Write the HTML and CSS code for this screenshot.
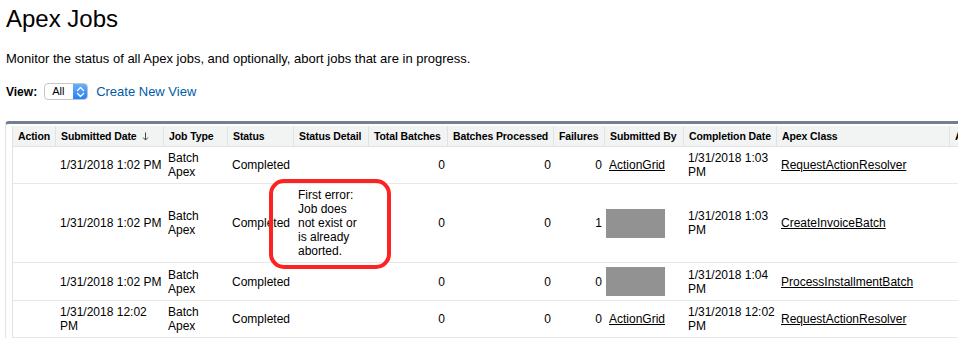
FILE: index.html
```html
<!DOCTYPE html>
<html>

<head>
    <title>Apex Jobs</title>
    <link rel="stylesheet" href="styles.css">
</head>

<body>
    <div class="page">
        <h1>Apex Jobs</h1>
        <p class="intro">Monitor the status of all Apex jobs, and optionally, abort jobs that are in progress.</p>
        <div class="view_bar">
            <label class="view_label">View:</label>
            <span class="select">
                <span class="select_text">All</span>
                <span class="stepper">
                    <svg width="9" height="12" viewBox="0 0 9 12">
                        <path d="M1.5 4.5 L4.5 1.5 L7.5 4.5 M1.5 7.5 L4.5 10.5 L7.5 7.5" fill="none" stroke="#fff" stroke-width="1.4" stroke-linecap="round" stroke-linejoin="round" />
                    </svg>
                </span>
            </span>
            <a class="create_link" href="#">Create New View</a>
        </div>

        <div class="block">
            <table class="jobs">
                <thead>
                    <tr>
                        <th class="c_action">Action</th>
                        <th class="c_submitted">Submitted Date
                            <svg class="sort" width="7" height="9" viewBox="0 0 7 9">
                                <path d="M3.5 0.5 V8 M1 5.5 L3.5 8 L6 5.5" fill="none" stroke="#444" stroke-width="1" />
                            </svg>
                        </th>
                        <th class="c_type">Job Type</th>
                        <th class="c_status">Status</th>
                        <th class="c_detail">Status Detail</th>
                        <th class="c_total">Total Batches</th>
                        <th class="c_processed">Batches Processed</th>
                        <th class="c_failures">Failures</th>
                        <th class="c_by">Submitted By</th>
                        <th class="c_completed">Completion Date</th>
                        <th class="c_class">Apex Class</th>
                        <th class="c_id">Apex Job ID</th>
                    </tr>
                </thead>
                <tbody>
                    <tr>
                        <td></td>
                        <td>1/31/2018 1:02 PM</td>
                        <td>Batch Apex</td>
                        <td>Completed</td>
                        <td></td>
                        <td class="num">0</td>
                        <td class="num">0</td>
                        <td class="num">0</td>
                        <td><a href="#">ActionGrid</a></td>
                        <td>1/31/2018 1:03 PM</td>
                        <td><a href="#">RequestActionResolver</a></td>
                        <td></td>
                    </tr>
                    <tr>
                        <td></td>
                        <td>1/31/2018 1:02 PM</td>
                        <td>Batch Apex</td>
                        <td>Completed</td>
                        <td class="detail">First error: Job does not exist or is already aborted.
                            <div class="callout"></div>
                        </td>
                        <td class="num">0</td>
                        <td class="num">0</td>
                        <td class="num">1</td>
                        <td><span class="redacted"></span></td>
                        <td>1/31/2018 1:03 PM</td>
                        <td><a href="#">CreateInvoiceBatch</a></td>
                        <td></td>
                    </tr>
                    <tr>
                        <td></td>
                        <td>1/31/2018 1:02 PM</td>
                        <td>Batch Apex</td>
                        <td>Completed</td>
                        <td></td>
                        <td class="num">0</td>
                        <td class="num">0</td>
                        <td class="num">0</td>
                        <td><span class="redacted"></span></td>
                        <td>1/31/2018 1:04 PM</td>
                        <td><a href="#">ProcessInstallmentBatch</a></td>
                        <td></td>
                    </tr>
                    <tr>
                        <td></td>
                        <td>1/31/2018 12:02 PM</td>
                        <td>Batch Apex</td>
                        <td>Completed</td>
                        <td></td>
                        <td class="num">0</td>
                        <td class="num">0</td>
                        <td class="num">0</td>
                        <td><a href="#">ActionGrid</a></td>
                        <td>1/31/2018 12:02 PM</td>
                        <td><a href="#">RequestActionResolver</a></td>
                        <td></td>
                    </tr>
                </tbody>
            </table>
        </div>
    </div>
</body>

</html>
```

FILE: styles.css
```css
html,
body {
    margin: 0;
    padding: 0;
    background: #fff;
    overflow: hidden;
}
.page {
    padding: 5px 0 0 6px;
    font-family: "Liberation Sans", Arial, sans-serif;
    color: #000;
}
h1 {
    margin: 0;
    font-size: 24px;
    line-height: 28px;
    font-weight: normal;
}
.intro {
    margin: 18px 0 0 0;
    font-size: 13px;
    line-height: 15px;
}
.view_bar {
    display: flex;
    align-items: center;
    margin-top: 17px;
    height: 17px;
}
.view_label {
    font-size: 12px;
    font-weight: bold;
    margin-right: 7px;
}
.select {
    display: flex;
    width: 44px;
    height: 17px;
    box-sizing: border-box;
    border: 1px solid #c6c6c6;
    border-radius: 4px;
    overflow: hidden;
    background: #fff;
}
.select_text {
    flex: 1;
    font-size: 11px;
    line-height: 15px;
    padding-left: 7px;
}
.stepper {
    width: 15px;
    display: flex;
    align-items: center;
    justify-content: center;
    background: linear-gradient(#6db2fb, #1f7ef6);
    margin: -1px -1px -1px 0;
}
.create_link {
    margin-left: 8px;
    font-size: 13px;
    color: #015ba7;
    text-decoration: none;
}
.block {
    margin: 21px 0 0 -1px;
    border-top: 3px solid #737d94;
    border-left: 1px solid #e0e3e5;
    border-top-left-radius: 4px;
    padding: 2px 0 0 6px;
    overflow: hidden;
}
.jobs {
    table-layout: fixed;
    width: 1038px;
    border-collapse: separate;
    border-spacing: 0;
    border-left: 1px solid #e0e3e5;
    font-size: 12px;
}
.jobs th {
    box-sizing: border-box;
    background-color: #f2f3f3;
    border-right: 1px solid #e0e3e5;
    border-bottom: 1px solid #e0e3e5;
    padding: 4px 1px 4px 5px;
    font-size: 10.5px;
    line-height: 12px;
    font-weight: bold;
    text-align: left;
    white-space: nowrap;
    letter-spacing: -0.1px;
}
.jobs td {
    border-bottom: 1px solid #e8e8e8;
    padding: 4px 1px 4px 4px;
    line-height: 14px;
    vertical-align: middle;
}
.jobs td.num {
    text-align: right;
    padding-right: 3px;
}
.jobs td.detail {
    position: relative;
    padding-right: 6px;
}
.jobs a {
    color: #000;
    text-decoration: underline;
}
.sort {
    margin-left: 3px;
    vertical-align: -1px;
}
.c_action { width: 43px; }
.c_submitted { width: 108px; }
.c_type { width: 64px; }
.c_status { width: 66px; }
.c_detail { width: 75px; }
.c_total { width: 79px; }
.c_processed { width: 106px; padding-left: 4px; }
.c_failures { width: 51px; }
.c_by { width: 79px; }
.c_completed { width: 93px; }
.c_class { width: 173px; }
.c_id { width: 101px; }
.callout {
    position: absolute;
    left: -25px;
    top: -5px;
    width: 122px;
    height: 90px;
    box-sizing: border-box;
    border: 4px solid #fd2323;
    border-radius: 15px;
}
.redacted {
    display: inline-block;
    vertical-align: middle;
    width: 59px;
    height: 29px;
    margin-left: -3px;
    background-color: #929292;
}
```
